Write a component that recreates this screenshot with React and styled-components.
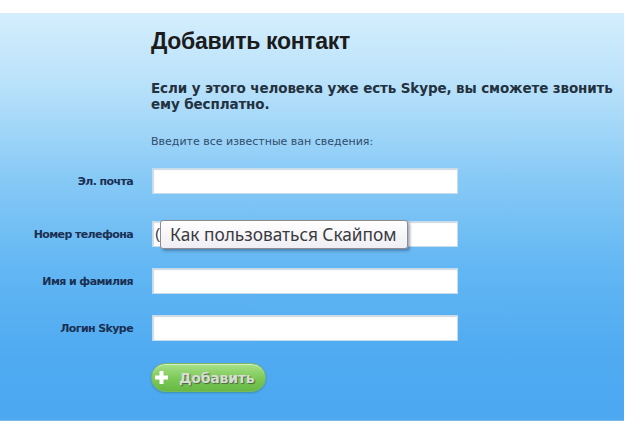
import React from "react";
import styled, { createGlobalStyle } from "styled-components";

const Global = createGlobalStyle`
  html, body { margin: 0; padding: 0; background: #ffffff; }
  body { font-family: "Liberation Sans", Arial, sans-serif; }
`;

const Page = styled.div`
  width: 640px;
  height: 441px;
  padding-top: 13px;
  box-sizing: border-box;
  background: #ffffff;
  overflow: hidden;
`;

const Panel = styled.div`
  width: 624px;
  height: 408px;
  box-sizing: border-box;
  padding: 15px 0 0 151px;
  background: linear-gradient(
    to bottom,
    #d4eefd 0%,
    #b8e1fa 18%,
    #88caf6 40%,
    #63b7f3 62%,
    #4faaf1 85%,
    #4ba8f1 100%
  );
  border-bottom: 1px solid #7fb6e6;
  display: flex;
  flex-direction: column;
`;

const Title = styled.h1`
  margin: 0;
  font-family: "Liberation Sans", Arial, sans-serif;
  font-weight: bold;
  font-size: 23px;
  line-height: 26px;
  color: #1c1c1c;
  letter-spacing: -0.3px;
`;

const Lead = styled.p`
  margin: 26px 0 0;
  width: 470px;
  font-family: "DejaVu Sans", Tahoma, sans-serif;
  font-weight: bold;
  font-size: 13.5px;
  line-height: 16px;
  color: #24313f;
  letter-spacing: -0.12px;
`;

const Hint = styled.p`
  margin: 24px 0 0;
  font-family: "DejaVu Sans", Tahoma, sans-serif;
  font-size: 11px;
  line-height: 12px;
  color: #2f4c6a;
  letter-spacing: 0px;
`;

const Form = styled.div`
  margin: 20px 0 0 -151px;
  display: grid;
  grid-template-columns: 133px 306px;
  column-gap: 19px;
  row-gap: 21px;
  align-items: start;
`;

const Label = styled.label`
  justify-self: end;
  height: 26px;
  display: flex;
  align-items: center;
  margin-bottom: ${(p) => (p.$extra ? `${p.$extra}px` : "0")};
  font-family: "DejaVu Sans", Tahoma, sans-serif;
  font-size: 11px;
  font-weight: bold;
  color: #1a2f52;
  letter-spacing: -0.6px;
  white-space: nowrap;
`;

const FieldWrap = styled.div`
  position: relative;
  height: 26px;
  margin-bottom: ${(p) => (p.$extra ? `${p.$extra}px` : "0")};
`;

const Input = styled.div`
  height: 26px;
  box-sizing: border-box;
  background: #ffffff;
  border: 1px solid #c8dbe9;
  box-shadow: inset 1px 1px 1px rgba(120, 150, 180, 0.35);
  font-family: "Liberation Sans", Arial, sans-serif;
  font-size: 15px;
  line-height: 24px;
  padding-left: 2px;
  color: #333;
`;

const Tooltip = styled.div`
  position: absolute;
  left: 8px;
  top: -1px;
  width: 248px;
  height: 29px;
  box-sizing: border-box;
  display: flex;
  align-items: center;
  padding-left: 9px;
  background: linear-gradient(to bottom, #ffffff, #eeeef4);
  border: 1px solid #8c8c92;
  border-radius: 3px;
  box-shadow: 2px 2px 3px rgba(40, 60, 90, 0.45);
  font-family: "Noto Sans", "Open Sans", sans-serif;
  font-size: 17.3px;
  color: #3a3a3e;
  white-space: nowrap;
`;

const ButtonRow = styled.div`
  margin-top: 22px;
`;

const AddButton = styled.button`
  display: inline-flex;
  align-items: center;
  gap: 11px;
  width: 115px;
  height: 29px;
  box-sizing: border-box;
  padding: 0 0 0 3px;
  border: 1px solid #79b95a;
  border-radius: 15px;
  background: linear-gradient(to bottom, #a8e08a 0%, #7fcb5a 50%, #66b844 100%);
  box-shadow: 0 1px 2px rgba(30, 90, 40, 0.35), inset 0 1px 0 rgba(255,255,255,0.5);
  font-family: "DejaVu Sans", Tahoma, sans-serif;
  font-weight: bold;
  font-size: 14px;
  letter-spacing: -0.2px;
  color: #d7ddd3;
  text-shadow: 1px 1px 1px rgba(60, 80, 60, 0.8);
  cursor: pointer;
`;

const PlusIcon = () => (
  <svg width="13" height="13" viewBox="0 0 13 13">
    <path d="M4.5 0h4v4.5H13v4H8.5V13h-4V8.5H0v-4h4.5z" fill="#ffffff" />
  </svg>
);

export default function App() {
  return (
    <Page>
      <Global />
      <Panel>
        <Title>Добавить контакт</Title>
        <Lead>
          Если у этого человека уже есть Skype, вы сможете звонить ему бесплатно.
        </Lead>
        <Hint>Введите все известные ван сведения:</Hint>
        <Form>
          <Label $extra={6}>Эл. почта</Label>
          <FieldWrap $extra={6}>
            <Input />
          </FieldWrap>
          <Label>Номер телефона</Label>
          <FieldWrap>
            <Input>(</Input>
            <Tooltip>Как пользоваться Скайпом</Tooltip>
          </FieldWrap>
          <Label>Имя и фамилия</Label>
          <FieldWrap>
            <Input />
          </FieldWrap>
          <Label>Логин Skype</Label>
          <FieldWrap>
            <Input />
          </FieldWrap>
        </Form>
        <ButtonRow>
          <AddButton>
            <PlusIcon />
            Добавить
          </AddButton>
        </ButtonRow>
      </Panel>
    </Page>
  );
}
